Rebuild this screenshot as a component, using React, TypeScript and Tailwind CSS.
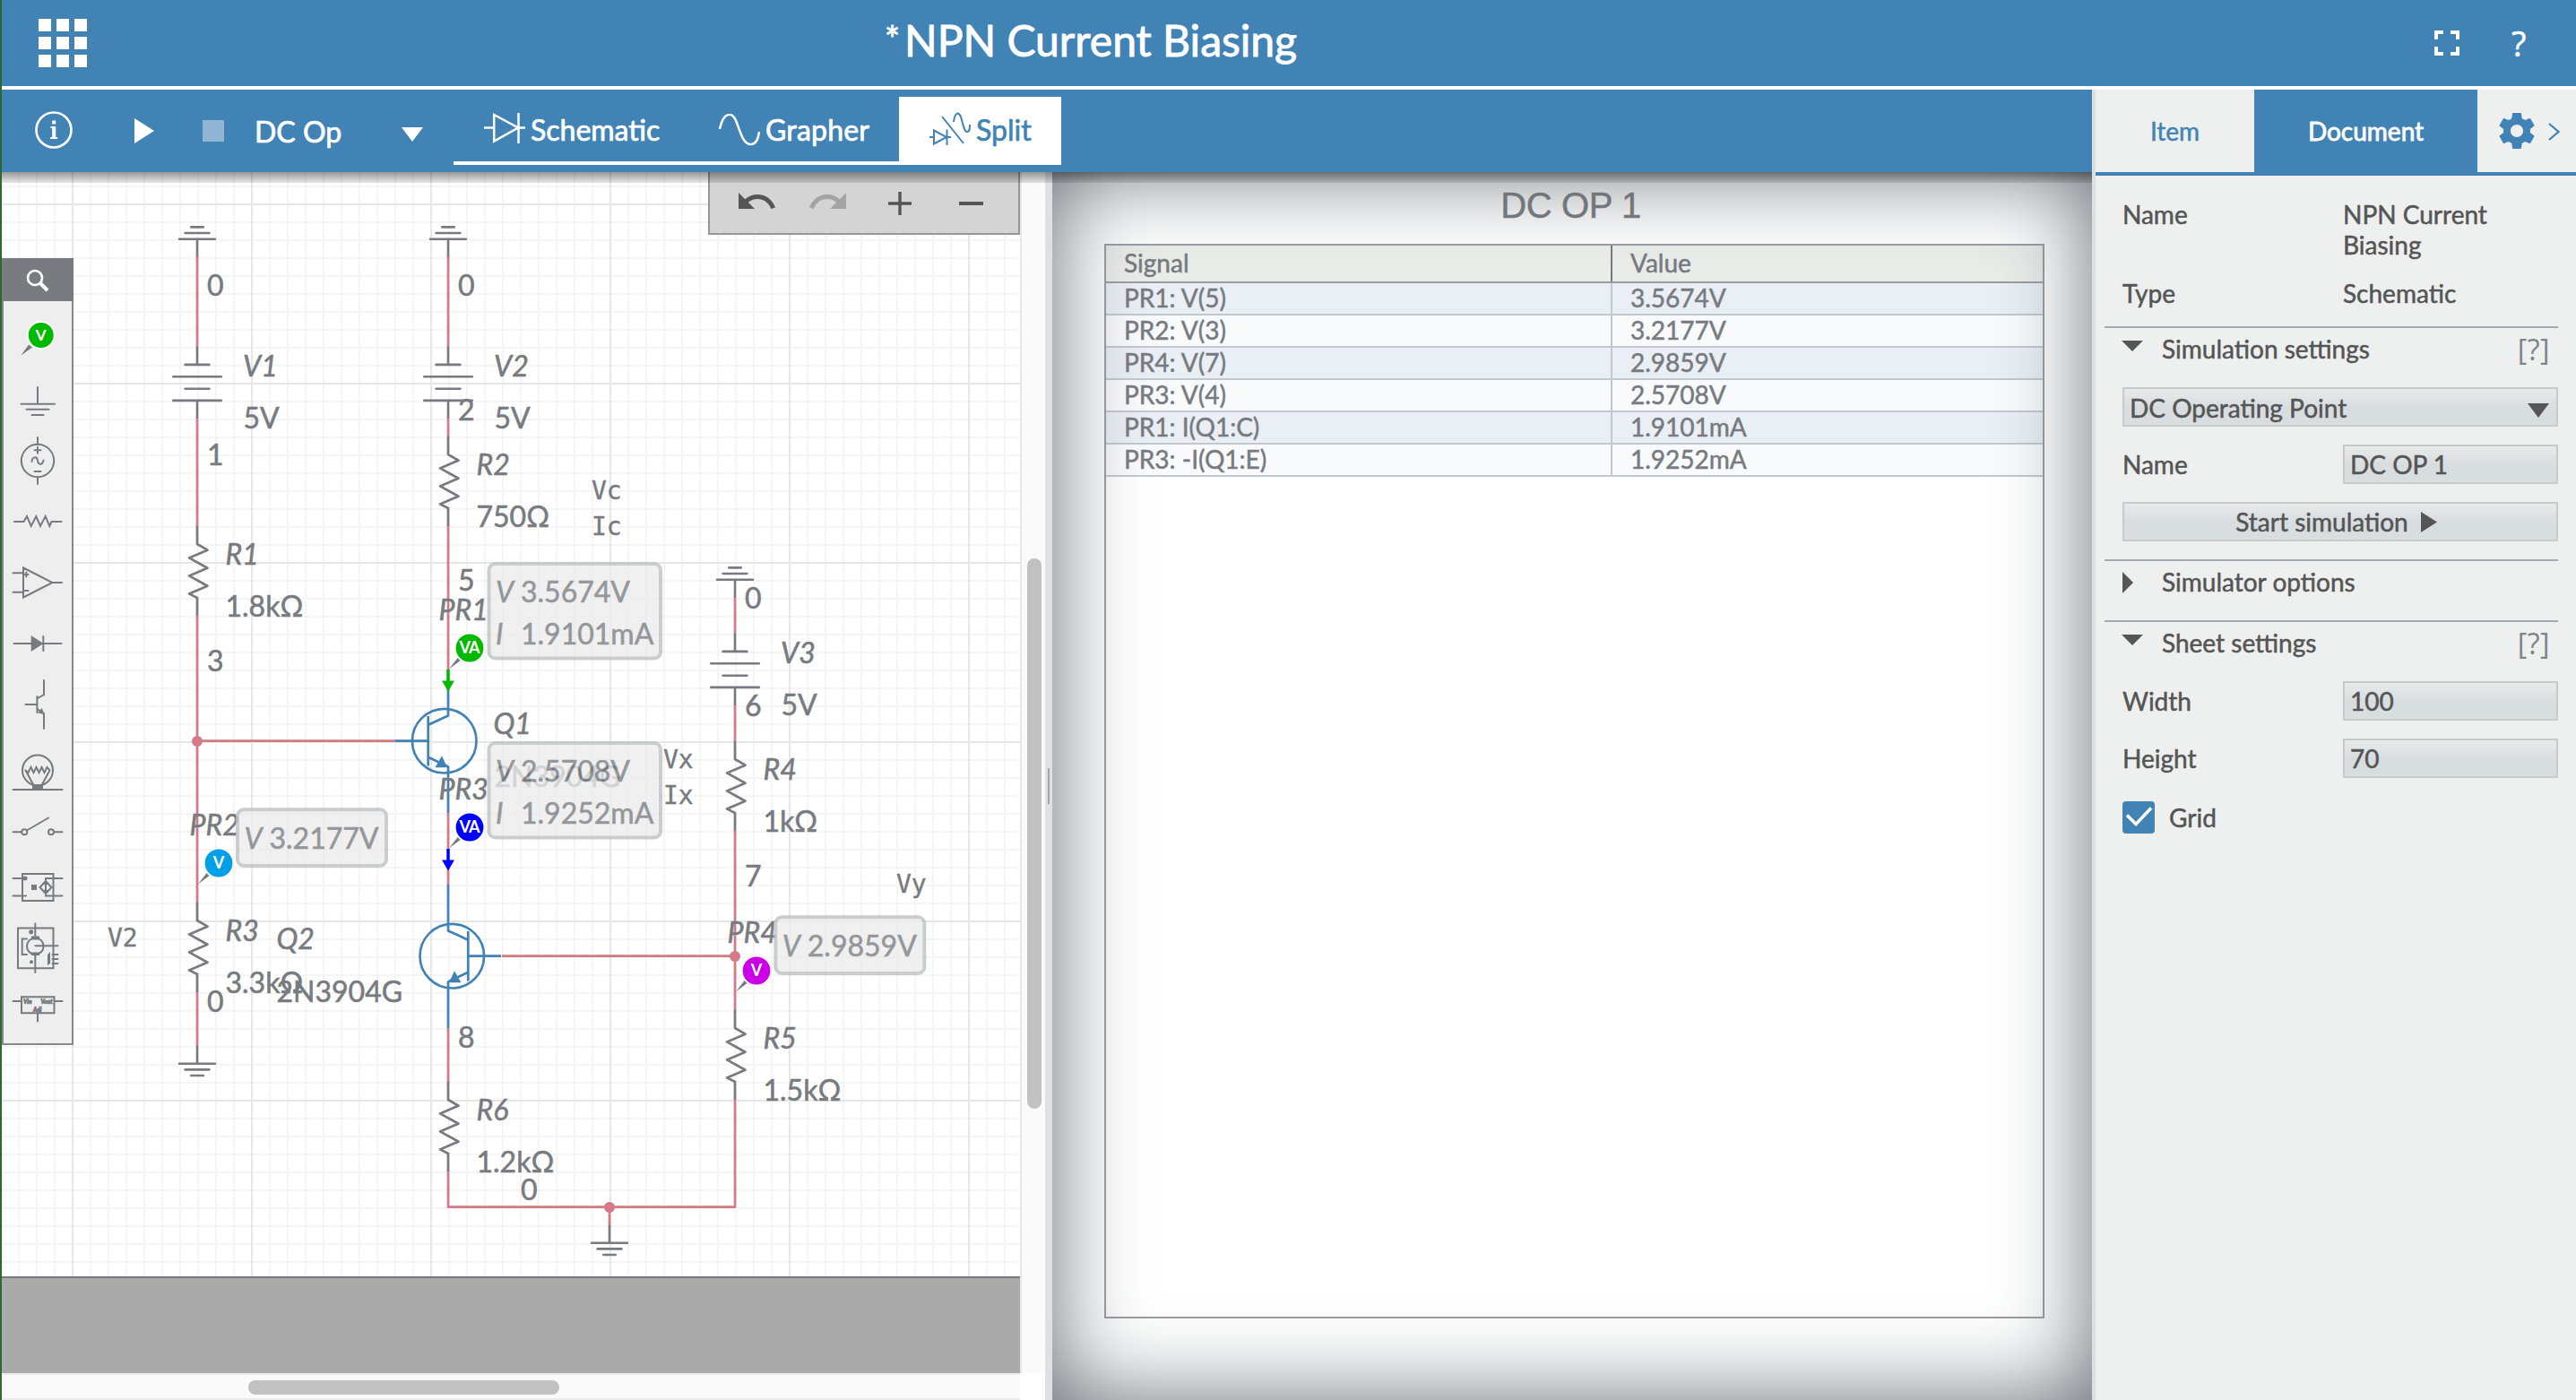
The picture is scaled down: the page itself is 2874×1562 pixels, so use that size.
import React from "react";

const INK = "#777b80";
const WIRE = "#d37a86";
const BLUE = "#4283b6";

/* ---------- schematic primitives ---------- */

function Seg({ d, c = INK }: { d: string; c?: string }) {
  return <path d={d} stroke={c} strokeWidth={2.7} fill="none" strokeLinejoin="round" strokeLinecap="butt" />;
}

function Ground({ x, y, up = false }: { x: number; y: number; up?: boolean }) {
  const s = up ? -1 : 1;
  return (
    <g stroke={INK} strokeWidth={2.6} strokeLinecap="round">
      <line x1={x} x2={x} y1={y} y2={y + s * 20} strokeLinecap="butt" />
      <line x1={x - 20} x2={x + 20} y1={y + s * 20} y2={y + s * 20} />
      <line x1={x - 13.4} x2={x + 13.4} y1={y + s * 26.7} y2={y + s * 26.7} />
      <line x1={x - 6.7} x2={x + 6.7} y1={y + s * 33.3} y2={y + s * 33.3} />
    </g>
  );
}

function Battery({ x, y }: { x: number; y: number }) {
  return (
    <g stroke={INK} strokeWidth={2.6} strokeLinecap="round">
      <line x1={x} x2={x} y1={y} y2={y + 20} strokeLinecap="butt" />
      <line x1={x - 13.4} x2={x + 13.4} y1={y + 20.2} y2={y + 20.2} />
      <line x1={x - 26.7} x2={x + 26.7} y1={y + 33.5} y2={y + 33.5} />
      <line x1={x - 13.4} x2={x + 13.4} y1={y + 47} y2={y + 47} />
      <line x1={x - 26.7} x2={x + 26.7} y1={y + 60.2} y2={y + 60.2} />
      <line x1={x} x2={x} y1={y + 60} y2={y + 80} strokeLinecap="butt" />
    </g>
  );
}

function Resistor({ x, y }: { x: number; y: number }) {
  return (
    <g transform={`translate(${x} ${y})`}>
      <Seg d="M0 0V20.3L11.5 27L-9 35.7L11.5 47L-9 55.7L11.5 67L-9 75.7L0 80.3V100" />
    </g>
  );
}

function Npn({ x, y, flip = false }: { x: number; y: number; flip?: boolean }) {
  return (
    <g transform={`translate(${x} ${y}) scale(${flip ? -1 : 1} 1)`}>
      <circle cx={-4.3} cy={0} r={35.8} fill="none" stroke={BLUE} strokeWidth={2.7} />
      <Seg c={BLUE} d="M-59 0H-22.3M-22.3 -27.7V27.7M0 -80V-28.3L-22.3 -18M-22.3 18L0 28.7V80" />
      <path d="M-7 16.5L-1 29.5L-14.5 29.5Z" fill={BLUE} />
    </g>
  );
}

function Dot({ x, y }: { x: number; y: number }) {
  return <circle cx={x} cy={y} r={6} fill={WIRE} />;
}

function Arrow({ x, y, c }: { x: number; y: number; c: string }) {
  return (
    <g>
      <rect x={x - 1.7} y={y} width={3.4} height={13} fill={c} />
      <path d={`M${x - 7} ${y + 12.5}H${x + 7}L${x} ${y + 24.5}Z`} fill={c} />
    </g>
  );
}

function Probe({ x, y, c, label }: { x: number; y: number; c: string; label: string }) {
  const wide = label === "VA";
  return (
    <g>
      <path d={`M${x - 23} ${y + 23.5}L${x - 13.5} ${y + 11}L${x - 10.5} ${y + 14}Z`} fill={INK} />
      <circle cx={x} cy={y} r={15.4} fill={c} />
      <text x={wide ? x - 0.5 : x} y={y + 5.7} textAnchor="middle" fill="#fff" fontSize={18} fontWeight={700} letterSpacing={wide ? -1 : 0}>
        {label}
      </text>
    </g>
  );
}

function T({ x, y, i = false, children }: { x: number; y: number; i?: boolean; children: React.ReactNode }) {
  return (
    <text x={x} y={y} fontSize={32} fill={INK} stroke={INK} strokeWidth={0.55} fontStyle={i ? "italic" : "normal"}>
      {children}
    </text>
  );
}

function Note({ x, y, children }: { x: number; y: number; children: React.ReactNode }) {
  return (
    <text x={x} y={y} fontSize={28} fill={INK} stroke={INK} strokeWidth={0.4} fontFamily='"DejaVu Sans Mono", monospace'>
      {children}
    </text>
  );
}

function Reading({ x, y, volt, amp }: { x: number; y: number; volt: string; amp?: string }) {
  const w = amp ? 191.5 : 166;
  const h = amp ? 105.5 : 62.7;
  return (
    <g opacity={0.78}>
      <rect x={x + 2} y={y + 2} width={w} height={h} rx={7} fill="#ececec" stroke="#bdbfc1" strokeWidth={4} />
      <T x={x + 9.5} y={y + 45.2} i>V</T>
      <T x={x + 37.5} y={y + 45.2}>{volt}</T>
      {amp && <T x={x + 9.5} y={y + 92.2} i>I</T>}
      {amp && <T x={x + 37.5} y={y + 92.2}>{amp}</T>}
    </g>
  );
}

function Schematic() {
  return (
    <svg viewBox="2 192 1136 1232" className="block h-[1232px] w-[1136px]" fontFamily='Lato, sans-serif'>
      <defs>
        <pattern id="minor" x={0} y={7} width={20} height={20} patternUnits="userSpaceOnUse">
          <path d="M0 0H2V20H0ZM0 0H20V2H0Z" fill="#f5f5f5" />
        </pattern>
        <pattern id="major" x={80} y={27} width={200} height={200} patternUnits="userSpaceOnUse">
          <path d="M0 0H2V200H0ZM0 0H200V2H0Z" fill="#e7e7e7" />
        </pattern>
      </defs>
      <rect x={2} y={192} width={1136} height={1232} fill="#fff" />
      <rect x={2} y={192} width={1136} height={1232} fill="url(#minor)" />
      <rect x={2} y={192} width={1136} height={1232} fill="url(#major)" />

      <Seg c={WIRE} d="M220 286V387M220 466V587M220 686V1007M220 1106V1167M220 826.7H441" />
      <Seg c={WIRE} d="M500 286V387M500 466V487M500 586V748M500 906V987M500 1146V1207M500 1306V1346.7H820V1226M560 1066.7H820M680 1346.7V1367" />
      <Seg c={WIRE} d="M820 666V707M820 786V827M820 926V1127" />
      <Ground x={220} y={286.7} up />
      <Ground x={500} y={286.7} up />
      <Ground x={820} y={666.7} up />
      <Ground x={220} y={1166.7} />
      <Ground x={680} y={1366.7} />
      <Battery x={220} y={386.7} />
      <Battery x={500} y={386.7} />
      <Battery x={820} y={706.7} />
      <Resistor x={220} y={586.7} />
      <Resistor x={500} y={486.7} />
      <Resistor x={220} y={1006.7} />
      <Resistor x={820} y={826.7} />
      <Resistor x={820} y={1126.7} />
      <Resistor x={500} y={1206.7} />
      <Npn x={500} y={826.7} />
      <Npn x={500} y={1066.7} flip />
      <Dot x={220} y={827} />
      <Dot x={820} y={1067} />
      <Dot x={680} y={1347} />

      <T x={231} y={329.5}>0</T>
      <T x={511} y={329.5}>0</T>
      <T x={231} y={519}>1</T>
      <T x={511} y={469}>2</T>
      <T x={231} y={749}>3</T>
      <T x={511} y={659}>5</T>
      <T x={231} y={1129}>0</T>
      <T x={511} y={1169}>8</T>
      <T x={581} y={1339}>0</T>
      <T x={831} y={679}>0</T>
      <T x={831} y={799}>6</T>
      <T x={831} y={989}>7</T>

      <T x={271} y={419.7} i>V1</T>
      <T x={271.5} y={478.3}>5V</T>
      <T x={551} y={419.7} i>V2</T>
      <T x={551.5} y={478.3}>5V</T>
      <T x={871} y={739.5} i>V3</T>
      <T x={871.5} y={798.3}>5V</T>
      <T x={251.5} y={629.7} i>R1</T>
      <T x={251.5} y={688}>1.8kΩ</T>
      <T x={531.5} y={529.7} i>R2</T>
      <T x={531.5} y={588}>750Ω</T>
      <T x={251.5} y={1049.5} i>R3</T>
      <T x={251.5} y={1108}>3.3kΩ</T>
      <T x={851.5} y={869.5} i>R4</T>
      <T x={851.5} y={928}>1kΩ</T>
      <T x={851.5} y={1169.5} i>R5</T>
      <T x={851.5} y={1228}>1.5kΩ</T>
      <T x={531.5} y={1249.5} i>R6</T>
      <T x={531.5} y={1308}>1.2kΩ</T>
      <T x={550.5} y={819} i>Q1</T>
      <T x={551.5} y={878.3}>2N3904G</T>
      <T x={308.5} y={1059} i>Q2</T>
      <T x={308.5} y={1118.3}>2N3904G</T>
      <T x={489.5} y={691.5} i>PR1</T>
      <T x={211.5} y={931.5} i>PR2</T>
      <T x={489.5} y={891.5} i>PR3</T>
      <T x={811.5} y={1051.5} i>PR4</T>

      <Note x={120} y={1056.3}>V2</Note>
      <Note x={660} y={556.5}>Vc</Note>
      <Note x={660} y={596.5}>Ic</Note>
      <Note x={740} y={856.5}>Vx</Note>
      <Note x={740} y={896.5}>Ix</Note>
      <Note x={1000} y={996.3}>Vy</Note>

      <Arrow x={500} y={747} c="#00b900" />
      <Arrow x={500} y={947} c="#0000ff" />
      <Probe x={524} y={723} c="#00b900" label="VA" />
      <Probe x={524} y={923} c="#0000ff" label="VA" />
      <Probe x={244} y={963} c="#009fe8" label="V" />
      <Probe x={844} y={1083} c="#cc00e6" label="V" />
      <Reading x={543.5} y={627} volt="3.5674V" amp="1.9101mA" />
      <Reading x={543.5} y={827} volt="2.5708V" amp="1.9252mA" />
      <Reading x={263} y={901.3} volt="3.2177V" />
      <Reading x={863.3} y={1021.3} volt="2.9859V" />
    </svg>
  );
}

/* ---------- component palette ---------- */

const paletteIcons: React.ReactNode[] = [
  <g key="probe">
    <path d="M23.3 396.7L32 384.5L36 387.5Z" fill={INK} stroke="none" />
    <circle cx={45.7} cy={374} r={15} fill="#00b900" stroke="#fff" strokeWidth={2} />
    <text x={45.7} y={379.5} textAnchor="middle" fontSize={17} fontWeight={700} fill="#fff" stroke="none">V</text>
  </g>,
  <path key="ground" d="M42 432V450.7M23.5 450.7H61M29.5 456.8H54.5M35.5 463H48.5" />,
  <g key="source">
    <circle cx={42} cy={514} r={18.2} />
    <path d="M42 488V496M42 532V540M38.5 502.3H45.5M42 498.8V505.8M38.5 526H45.5M35.5 515C36 509 41.5 509 42 514S47.500 519 48.500 513.500" />
  </g>,
  <path key="res" d="M16 582H26.500L30 576L34.700 587L40.300 576L45 587L50.700 576L55.300 587L57.500 582H68.500" />,
  <path key="opamp" d="M26 633.500V666.500L58.500 650ZM58.500 650H69M14.500 639.300H26M14.500 660.700H26M27 641H31.500M29.300 638.500V643.500M27 659H31.500" />,
  <g key="diode">
    <path d="M15.500 718H68.500M48.300 710V726" />
    <path d="M34.700 709V727L48.500 718Z" fill={INK} stroke="none" />
  </g>,
  <g key="npn">
    <path d="M49 759V775L41.500 779.300M41.400 777V795M28.500 786H41M41.500 791L49 796V813" />
    <path d="M46.800 790L49.500 797L42 795.500Z" fill={INK} stroke="none" />
  </g>,
  <g key="lamp">
    <circle cx={42} cy={859.500} r={17} />
    <path d="M28.500 859.500L31.500 862L34.500 856L37.500 862L40.500 856L43.500 862L46.500 856L49.500 862L52.500 856L55.500 859.500M28.500 859.500L37.500 876M55.500 859.500L46.500 876" />
    <path d="M14.500 881H69.500" />
    <path d="M36 875H48V881H36Z" fill={INK} stroke="none" />
  </g>,
  <g key="switch">
    <circle cx={27.300} cy={928.300} r={3} />
    <circle cx={57} cy={928.300} r={3} />
    <path d="M14.500 928.300H24M60 928.300H69.500M30 926.500L54 912.500" />
  </g>,
  <g key="relay">
    <path d="M25 975H59.500V1005H25ZM14.500 980H28M14.500 999.500H29M69.500 980H51V999.500H69.500M51 983L57.500 990L51 997L44.500 990Z" />
    <circle cx={28} cy={980} r={1.500} fill={INK} />
    <path d="M35 987H41V993H35ZM48.500 985L51 983L53.500 987H48.500ZM48.500 993H53.500L51 997Z" fill={INK} stroke="none" />
  </g>,
  <g key="motor">
    <path d="M20 1035.500H59.500V1080.300H20ZM39.300 1030.500V1046M39.300 1065V1085M39.300 1055.300H64.500M30 1047.500H24.700V1065H30M58.500 1065H64.500M58.500 1070H64.500M58.500 1075H64.500" />
    <circle cx={39.300} cy={1055.700} r={9.300} />
    <path d="M35 1044.500H44V1048.500H35ZM35 1062.500H44V1066H35ZM53 1065L56 1062V1075L53 1077Z" fill={INK} stroke="none" />
    <circle cx={34.700} cy={1039.700} r={1.500} fill={INK} />
    <circle cx={35} cy={1073.300} r={1} fill={INK} />
  </g>,
  <g key="regulator">
    <path d="M24 1112.300H60.500V1130.300H24ZM14.500 1117H24M60.500 1117H69.500M42 1130.500V1139.500" />
    <g fontSize={6.500} fontWeight={900} fontStyle="italic" fill={INK} stroke={INK} strokeWidth={0.700}>
      <text x={26} y={1120}>Vin</text>
      <text x={45.500} y={1120}>Vout</text>
      <text x={37} y={1128.500}>Adj</text>
    </g>
  </g>,
];

function Palette() {
  return (
    <div className="absolute left-0 top-[96px] flex h-[878px] w-[80px] flex-col border-2 border-t-0 border-[#84888c] bg-[#eeeeee]">
      <div className="-mx-[2px] flex h-12 shrink-0 items-center justify-center bg-[#787b80]">
        <svg viewBox="0 0 26 26" className="mt-[2px] h-[26px] w-[26px]" fill="none" stroke="#fff">
          <circle cx={10} cy={10} r={8} strokeWidth={2.6} />
          <path d="M15.500 15.500L24 24" strokeWidth={4} />
        </svg>
      </div>
      <div className="flex flex-col pt-2">
        {paletteIcons.map((icon, n) => (
          <svg key={n} viewBox={`4 ${344 + n * 68} 76 68`} className="block h-[68px] w-[76px]" fill="none" stroke={INK} strokeWidth={2} strokeLinecap="round" fontFamily="Lato, sans-serif">
            {icon}
          </svg>
        ))}
      </div>
    </div>
  );
}

function CanvasTools() {
  return (
    <div className="absolute right-0 top-0 h-[70px] w-[348px] border-2 border-t-0 border-[#969696] bg-[#d4d4d4]">
      <div className="flex h-full items-center pl-7 pt-px">
        <svg viewBox="0 0 24 24" className="mb-1 h-12 w-12" fill="#555">
          <path d="M12.500 8c-2.650 0-5.050.990-6.900 2.600L2 7v9h9l-3.620-3.620c1.390-1.160 3.160-1.880 5.120-1.880 3.540 0 6.550 2.310 7.600 5.500l2.370-.780C21.080 11.030 17.150 8 12.500 8z" />
        </svg>
        <svg viewBox="0 0 24 24" className="mb-1 ml-8 h-12 w-12" fill="#a4a4a4">
          <path d="M18.400 10.600C16.550 8.990 14.150 8 11.500 8c-4.650 0-8.580 3.030-9.960 7.220L3.900 16c1.050-3.190 4.050-5.500 7.600-5.500 1.950 0 3.730.720 5.120 1.880L13 16h9V7l-3.600 3.600z" />
        </svg>
        <svg viewBox="0 0 26 26" className="ml-[43px] h-[26px] w-[26px]" fill="#555">
          <path d="M11.300 0h3.400v11.300H26v3.400H14.700V26h-3.400V14.700H0v-3.400h11.300z" />
        </svg>
        <div className="ml-[53px] h-[4px] w-[27px] bg-[#555]" />
      </div>
    </div>
  );
}

/* ---------- top bars ---------- */

function Header() {
  return (
    <div className="flex h-[100px] shrink-0 items-start border-b-4 border-white bg-[#4283b6] text-white">
      <div className="ml-[41px] mt-[21px] grid grid-cols-3 gap-[6px]">
        {Array.from({ length: 9 }, (_, n) => (
          <div key={n} className="h-[14px] w-[14px] bg-white" />
        ))}
      </div>
      <div className="ml-[890px] mt-[16px] flex h-[58px] w-[480px] items-start whitespace-nowrap [-webkit-text-stroke:0.9px]">
        <span className="w-[22px] pt-[4px] text-[40px] leading-[48px]">*</span>
        <span className="text-[48px] leading-[58px]">NPN Current Biasing</span>
      </div>
      <div className="ml-auto mr-[54px] mt-[34px] flex items-center gap-[58px]">
        <svg viewBox="0 0 28 28" className="h-7 w-7" fill="#fff">
          <path d="M0 0h10v4H4v6H0zM18 0h10v10h-4V4h-6zM0 18h4v6h6v4H0zM24 18h4v10H18v-4h6z" />
        </svg>
        <span className="h-7 w-[18px] font-['Open_Sans'] text-[38px] leading-[28px] [-webkit-text-stroke:0.5px]">?</span>
      </div>
    </div>
  );
}

function Toolbar() {
  return (
    <div className="flex h-[92px] shrink-0 items-start bg-[#4283b6] text-[32px] leading-[40px] text-white [-webkit-text-stroke:0.7px]">
      <svg viewBox="0 0 42 42" className="ml-[37px] mt-[24px] h-[42px] w-[42px]" fill="#fff">
        <circle cx={21} cy={21} r={19.500} fill="none" stroke="#fff" strokeWidth={2.600} />
        <path d="M19.200 10.500h4v4h-4zM17.500 17h5.700v12h2v2h-8v-2h2v-10h-1.700z" />
      </svg>
      <svg viewBox="0 0 22 28" className="ml-[69px] mt-[32px] h-[28px] w-[22px]" fill="#fff">
        <path d="M0 0L22 14L0 28z" />
      </svg>
      <div className="ml-[54px] mt-[34px] h-6 w-6 bg-[#8fb5d3]" />
      <span className="ml-[34px] mt-[27px] w-[119px]">DC Op</span>
      <svg viewBox="0 0 24 16" className="ml-[45px] mt-[42px] h-4 w-6" fill="#fff">
        <path d="M0 0h24L12 16z" />
      </svg>
      <div className="ml-[34px] mt-2 flex h-[76px] border-b-4 border-white">
        <div className="flex w-[262px] pl-[34px]">
          <svg viewBox="0 0 46 36" className="mt-[17px] h-[36px] w-[46px]" fill="none" stroke="#fff" strokeWidth={2.500}>
            <path d="M0 17.500H10M11.200 3V32.500L38 17.500ZM38.500 1V35M38 17.500H46" />
          </svg>
          <span className="ml-[6px] mt-[17px]">Schematic</span>
        </div>
        <div className="flex w-[235px] pl-[34px]">
          <svg viewBox="0 0 46 36" className="mt-[19px] h-[36px] w-[46px]" fill="none" stroke="#fff" strokeWidth={2.500}>
            <path d="M1 17C5 -2 15 -4 20 10C25 24 28 34 36 34C41 34 44 28 45 20" />
          </svg>
          <span className="ml-[6px] mt-[17px] tracking-[0.2px]">Grapher</span>
        </div>
        <div className="flex h-[76px] w-[181px] bg-white pl-[34px] text-[#4283b6]">
          <svg viewBox="0 0 46 38" className="mt-[17px] h-[38px] w-[46px]" fill="none" stroke={BLUE} strokeWidth={2}>
            <path d="M14 5L38 35M0 28H4M5 20.500V35.500L19 28ZM19.500 19.500V37M19 28H24M27 11C28 1 33 -2 35.500 7S39 22 42 22S45 18 45 14" />
          </svg>
          <span className="ml-[6px] mt-[17px]">Split</span>
        </div>
      </div>
    </div>
  );
}

/* ---------- result grid ---------- */

const results = [
  ["PR1: V(5)", "3.5674V"],
  ["PR2: V(3)", "3.2177V"],
  ["PR4: V(7)", "2.9859V"],
  ["PR3: V(4)", "2.5708V"],
  ["PR1: I(Q1:C)", "1.9101mA"],
  ["PR3: -I(Q1:E)", "1.9252mA"],
];

function Grapher() {
  return (
    <div className="relative flex h-full min-w-0 flex-1 flex-col bg-white text-[#777b80] [-webkit-text-stroke:0.5px]">
      <div className="flex h-[80px] shrink-0 justify-center pr-[3px] pt-[14px] font-['Liberation_Sans'] text-[40px] leading-[46px] tracking-[-0.4px]">DC OP 1</div>
      <div className="ml-[58px] mr-[53px] h-[1199px] border-2 border-[#9a9da1] bg-white text-[28px]">
        <div className="flex h-[42px] border-b-2 border-[#999ca0] bg-[#ebedeb] leading-[39px]">
          <div className="w-[565px] border-r-2 border-[#777b80] pl-[20px]">Signal</div>
          <div className="pl-[20px]">Value</div>
        </div>
        {results.map(([signal, value], n) => (
          <div key={signal} className={`flex h-9 border-b-2 border-[#c3c8cc] leading-[33px] ${n % 2 ? "bg-[#f9fafc]" : "bg-[#e9eff4]"}`}>
            <div className="w-[565px] border-r-2 border-[#c3c8cc] pl-[20px]">{signal}</div>
            <div className="pl-[20px]">{value}</div>
          </div>
        ))}
      </div>
      <div className="pointer-events-none absolute inset-0 shadow-[inset_0_0_100px_#666a71]" />
    </div>
  );
}

/* ---------- settings panel ---------- */

function Tri({ open }: { open: boolean }) {
  return open ? (
    <svg viewBox="0 0 24 12" className="-ml-[1px] mt-[8px] h-3 w-6 shrink-0" fill="#555"><path d="M0 0h24L12 12z" /></svg>
  ) : (
    <svg viewBox="0 0 12 24" className="mr-[11px] mt-[6px] h-6 w-3 shrink-0" fill="#555"><path d="M0 0L12 12L0 24z" /></svg>
  );
}

function Section({ title, open, help }: { title: string; open: boolean; help?: boolean }) {
  return (
    <div className="flex h-[68px] items-start border-t-2 border-[#a7a9b0] pl-[20px] pr-[9px] pt-[6px]">
      <Tri open={open} />
      <span className="ml-[21px]">{title}</span>
      {help && <span className="ml-auto pt-[1px] font-['Open_Sans'] text-[32px] tracking-[0.5px] text-[#808489] [-webkit-text-stroke:0px]">[?]</span>}
    </div>
  );
}

function Field({ label, value }: { label: string; value: string }) {
  return (
    <div className="mb-5 flex h-11 items-center pl-[20px]">
      <span className="w-[246px]">{label}</span>
      <div className="flex h-11 w-[240px] items-center border-2 border-[#c9cbcb] bg-linear-to-b from-[#e9eaeb] to-[#d8dde0] to-50% pl-[6px]">{value}</div>
    </div>
  );
}

function Panel() {
  return (
    <div className="flex w-[540px] shrink-0 flex-col border-l-4 border-[#dce1e6] bg-[#eef0ef] text-[28px] leading-[34px] text-[#555] [-webkit-text-stroke:0.5px]">
      <div className="flex h-[96px] border-b-4 border-[#4283b6] text-[#4283b6]">
        <div className="flex w-[177px] items-center justify-center">Item</div>
        <div className="flex w-[249px] items-center justify-center bg-[#4283b6] text-white [-webkit-text-stroke:0.8px]">Document</div>
        <div className="flex items-center pl-[20px]">
          <svg viewBox="0 0 24 24" className="h-[48px] w-[48px]" fill={BLUE}>
            <path fillRule="evenodd" d="M19.430 12.980c.040-.320.070-.640.070-.980s-.030-.660-.070-.980l2.110-1.650c.190-.150.240-.420.120-.640l-2-3.460c-.120-.220-.390-.300-.610-.220l-2.490 1c-.520-.400-1.080-.730-1.690-.980l-.380-2.650C14.460 2.180 14.250 2 14 2h-4c-.250 0-.460.180-.490.420l-.380 2.650c-.610.250-1.170.590-1.690.980l-2.490-1c-.230-.090-.490 0-.610.220l-2 3.460c-.130.220-.070.490.120.640l2.110 1.650c-.040.320-.070.650-.070.980s.030.660.070.980l-2.110 1.650c-.190.150-.240.420-.120.640l2 3.460c.120.220.390.300.610.220l2.490-1c.520.400 1.080.730 1.690.980l.380 2.650c.030.240.240.420.490.420h4c.250 0 .460-.180.490-.420l.380-2.650c.610-.250 1.170-.590 1.690-.980l2.490 1c.230.090.490 0 .610-.220l2-3.460c.120-.220.070-.490-.120-.640l-2.110-1.650zM12 15.500c-1.930 0-3.500-1.570-3.500-3.500s1.570-3.500 3.500-3.500 3.500 1.570 3.500 3.500-1.570 3.500-3.500 3.500z" />
          </svg>
          <svg viewBox="0 0 13 20" className="ml-[11px] mt-[2px] h-5 w-[13px]" fill="none" stroke={BLUE} strokeWidth={2.300}>
            <path d="M1 1L11.500 10L1 19" />
          </svg>
        </div>
      </div>
      <div className="ml-[10px] mr-[20px] flex flex-col">
        <div className="flex pl-[20px] pt-[26px]">
          <span className="w-[246px]">Name</span>
          <span className="w-[200px]">NPN Current Biasing</span>
        </div>
        <div className="flex pb-5 pl-[20px] pt-5">
          <span className="w-[246px]">Type</span>
          <span>Schematic</span>
        </div>
        <Section title="Simulation settings" open help />
        <div className="mb-5 ml-[20px] flex h-11 items-center justify-between border-2 border-[#c9cbcb] bg-linear-to-b from-[#e9eaeb] to-[#d8dde0] to-50% pl-[6px] pr-[8px]">
          <span className="pt-[2px]">DC Operating Point</span>
          <svg viewBox="0 0 24 16" className="mt-[8px] h-4 w-6" fill="#555"><path d="M0 0h24L12 16z" /></svg>
        </div>
        <Field label="Name" value="DC OP 1" />
        <div className="mb-5 ml-[20px] flex h-11 items-center justify-center border-2 border-[#c9cbcb] bg-linear-to-b from-[#e9eaeb] to-[#d8dde0] to-50% pr-[9px]">
          <span>Start simulation</span>
          <svg viewBox="0 0 18 23" className="ml-[14px] h-[23px] w-[18px]" fill="#555"><path d="M0 0L18 11.500L0 23z" /></svg>
        </div>
        <Section title="Simulator options" open={false} />
        <Section title="Sheet settings" open help />
        <Field label="Width" value="100" />
        <Field label="Height" value="70" />
        <div className="flex items-center pl-[20px] pt-[6px]">
          <div className="flex h-9 w-9 items-center justify-center rounded bg-[#4283b6]">
            <svg viewBox="0 0 36 36" className="h-9 w-9" fill="none" stroke="#fff" strokeWidth={3.600}>
              <path d="M5 15.500L15 25.500L32 7.500" />
            </svg>
          </div>
          <span className="ml-4">Grid</span>
        </div>
      </div>
    </div>
  );
}

export default function App() {
  return (
    <div className="flex h-[1562px] w-[2874px] overflow-hidden bg-white font-[Lato,sans-serif]">
      <div className="w-[2px] shrink-0 bg-[#2c6a30]" />
      <div className="flex min-w-0 flex-1 flex-col">
        <Header />
        <div className="flex min-h-0 flex-1">
          <div className="flex min-w-0 flex-1 flex-col">
            <Toolbar />
            <div className="relative flex min-h-0 flex-1">
              <div className="flex w-[1164px] shrink-0 flex-col">
                <div className="flex h-[1340px]">
                  <div className="relative w-[1136px] bg-[#aaaaaa]">
                    <Schematic />
                    <div className="h-[2px] bg-[#75797d]" />
                    <Palette />
                    <CanvasTools />
                  </div>
                  <div className="w-[28px] border-l-2 border-[#e6e6e6] bg-[#fafafa] pl-[6px] pt-[431px]">
                    <div className="h-[614px] w-4 rounded-full bg-[#c1c1c1]" />
                  </div>
                </div>
                <div className="h-[30px] w-[1136px] border-b-2 border-t-2 border-[#ebebeb] bg-[#fafafa] pl-[275px] pt-[6px]">
                  <div className="h-4 w-[347px] rounded-full bg-[#c1c1c1]" />
                </div>
              </div>
              <div className="flex w-2 shrink-0 items-start justify-center bg-[#dce1e6] pt-[665px]">
                <div className="h-10 w-[2px] bg-[#a4a8ad]" />
              </div>
              <Grapher />
              <div className="pointer-events-none absolute inset-x-0 top-0 h-3 bg-linear-to-b from-black/40 to-black/10" />
            </div>
          </div>
          <Panel />
        </div>
      </div>
    </div>
  );
}
